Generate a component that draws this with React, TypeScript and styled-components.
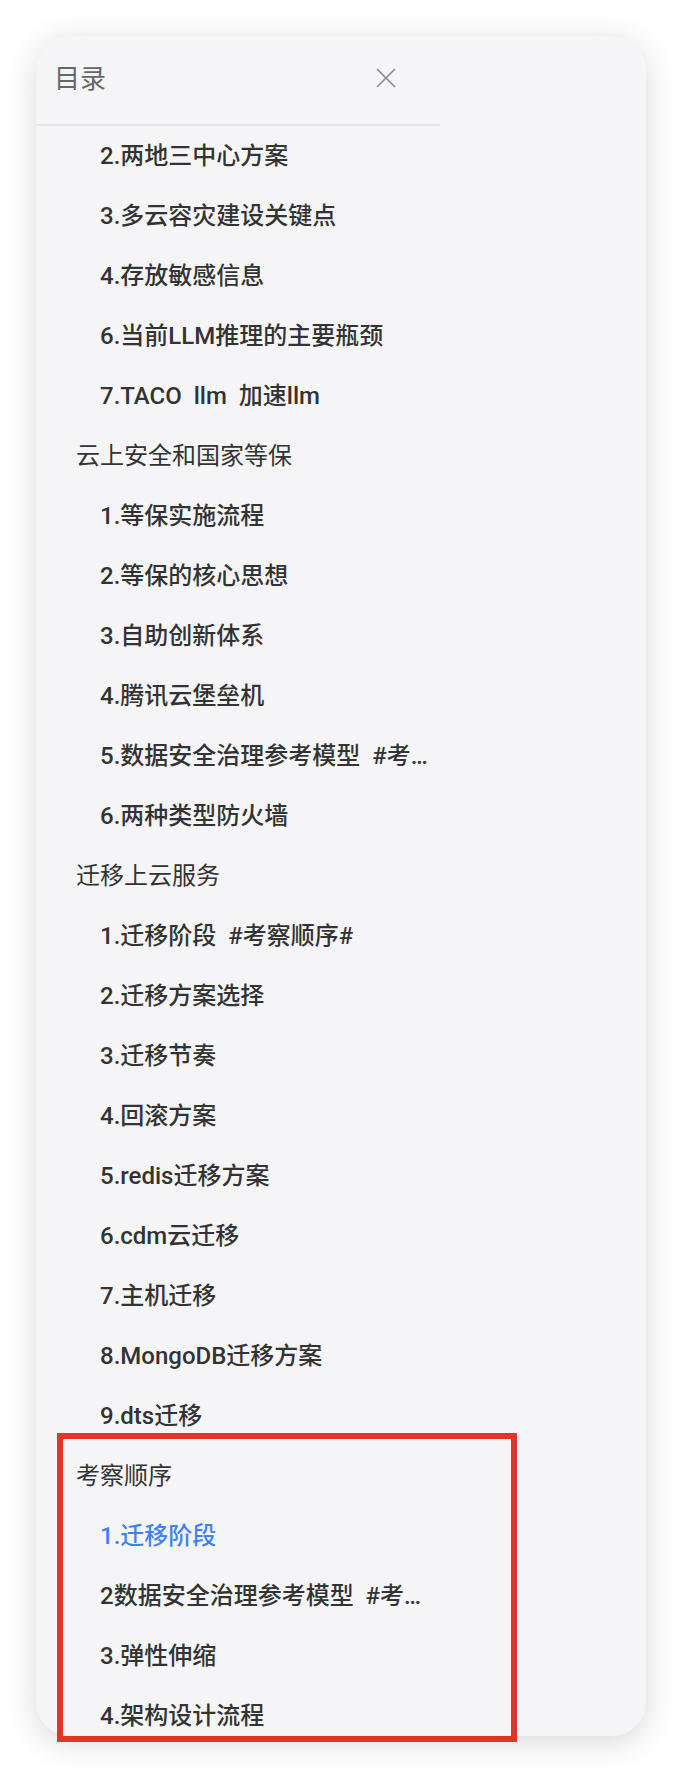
import React from "react";
import styled, { createGlobalStyle } from "styled-components";

const GlobalStyle = createGlobalStyle`
  html, body {
    margin: 0;
    padding: 0;
    background: #ffffff;
  }
  body {
    font-family: "Roboto", "Noto Sans CJK SC", sans-serif;
  }
`;

interface TocItem {
  title: string;
  level: 1 | 2;
  active?: boolean;
}

const items: TocItem[] = [
  { title: "2.两地三中心方案", level: 2 },
  { title: "3.多云容灾建设关键点", level: 2 },
  { title: "4.存放敏感信息", level: 2 },
  { title: "6.当前LLM推理的主要瓶颈", level: 2 },
  { title: "7.TACO  llm  加速llm", level: 2 },
  { title: "云上安全和国家等保", level: 1 },
  { title: "1.等保实施流程", level: 2 },
  { title: "2.等保的核心思想", level: 2 },
  { title: "3.自助创新体系", level: 2 },
  { title: "4.腾讯云堡垒机", level: 2 },
  { title: "5.数据安全治理参考模型  #考察顺序#", level: 2 },
  { title: "6.两种类型防火墙", level: 2 },
  { title: "迁移上云服务", level: 1 },
  { title: "1.迁移阶段  #考察顺序#", level: 2 },
  { title: "2.迁移方案选择", level: 2 },
  { title: "3.迁移节奏", level: 2 },
  { title: "4.回滚方案", level: 2 },
  { title: "5.redis迁移方案", level: 2 },
  { title: "6.cdm云迁移", level: 2 },
  { title: "7.主机迁移", level: 2 },
  { title: "8.MongoDB迁移方案", level: 2 },
  { title: "9.dts迁移", level: 2 },
  { title: "考察顺序", level: 1 },
  { title: "1.迁移阶段", level: 2, active: true },
  { title: "2数据安全治理参考模型  #考察顺序#", level: 2 },
  { title: "3.弹性伸缩", level: 2 },
  { title: "4.架构设计流程", level: 2 },
];

const Page = styled.div`
  position: relative;
  width: 682px;
  height: 1772px;
  padding: 36px 0 0 36px;
  box-sizing: border-box;
  overflow: hidden;
`;

const Card = styled.div`
  width: 610px;
  height: 1700px;
  background: #f5f5f7;
  border-radius: 34px;
  box-shadow: 0 6px 32px rgba(0, 0, 0, 0.16);
  overflow: hidden;
  display: flex;
`;

const Drawer = styled.div`
  width: 404px;
  display: flex;
  flex-direction: column;
`;

const Header = styled.div`
  height: 88px;
  display: flex;
  align-items: center;
  justify-content: space-between;
  padding: 0 42px 0 18px;
  border-bottom: 2px solid #e6e6e9;
  flex-shrink: 0;
`;

const Title = styled.div`
  font-size: 26px;
  color: #666666;
  font-family: "Noto Sans CJK SC", sans-serif;
  padding-bottom: 8px;
`;

const CloseButton = styled.button`
  width: 24px;
  height: 24px;
  border: 0;
  padding: 0;
  background: transparent;
  display: flex;
  align-items: center;
  justify-content: center;
  margin-bottom: 4px;
`;

const List = styled.div`
  display: flex;
  flex-direction: column;
`;

const Row = styled.div<{ $level: 1 | 2; $active?: boolean }>`
  height: 60px;
  line-height: 60px;
  flex-shrink: 0;
  padding-left: ${(p) => (p.$level === 1 ? 40 : 64)}px;
  padding-right: 8px;
  font-size: 24px;
  font-weight: ${(p) => (p.$level === 1 ? 400 : 500)};
  color: ${(p) => (p.$active ? "#3f82f0" : "#333333")};
  white-space: pre;
  overflow: hidden;
  text-overflow: ellipsis;
`;

const Highlight = styled.div`
  position: absolute;
  left: 57px;
  top: 1433px;
  width: 460px;
  height: 309px;
  border: 6px solid #e1352a;
  box-sizing: border-box;
  pointer-events: none;
`;

const CloseIcon = () => (
  <svg width="20" height="20" viewBox="0 0 20 20">
    <path
      d="M1 1 L19 19 M19 1 L1 19"
      stroke="#8a8a8c"
      strokeWidth="1.6"
      fill="none"
    />
  </svg>
);

export default function App() {
  return (
    <>
      <GlobalStyle />
      <Page>
        <Card>
          <Drawer>
            <Header>
              <Title>目录</Title>
              <CloseButton>
                <CloseIcon />
              </CloseButton>
            </Header>
            <List>
              {items.map((item, i) => (
                <Row key={i} $level={item.level} $active={item.active}>
                  {item.title}
                </Row>
              ))}
            </List>
          </Drawer>
        </Card>
        <Highlight />
      </Page>
    </>
  );
}
